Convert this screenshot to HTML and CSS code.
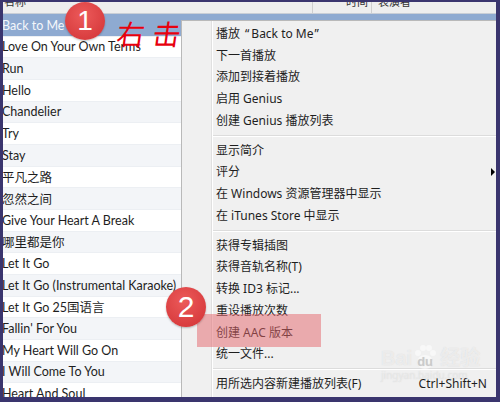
FILE: index.html
```html
<!DOCTYPE html>
<html>
<head>
	<title>iTunes context menu</title>
	<link rel="stylesheet" href="styles.css">
</head>
<body>
	<div class="screen">
		<div class="header">
			<span class="colName">名称</span>
			<span class="colTime">时间</span>
			<span class="colArtist">表演者</span>
		</div>

		<div class="list">
			<div class="row selected"><span class="colName">Back to Me</span><span class="colTime">3:26</span><span class="colArtist">Marian Hill</span></div>
			<div class="row"><span class="colName">Love On Your Own Terms</span></div>
			<div class="row"><span class="colName">Run</span></div>
			<div class="row"><span class="colName">Hello</span></div>
			<div class="row"><span class="colName">Chandelier</span></div>
			<div class="row"><span class="colName">Try</span></div>
			<div class="row"><span class="colName">Stay</span></div>
			<div class="row"><span class="colName">平凡之路</span></div>
			<div class="row"><span class="colName">忽然之间</span></div>
			<div class="row"><span class="colName">Give Your Heart A Break</span></div>
			<div class="row"><span class="colName">哪里都是你</span></div>
			<div class="row"><span class="colName">Let It Go</span></div>
			<div class="row"><span class="colName">Let It Go (Instrumental Karaoke)</span></div>
			<div class="row"><span class="colName">Let It Go 25国语言</span></div>
			<div class="row"><span class="colName">Fallin' For You</span></div>
			<div class="row"><span class="colName">My Heart Will Go On</span></div>
			<div class="row"><span class="colName">I Will Come To You</span></div>
			<div class="row"><span class="colName">Heart And Soul</span></div>
		</div>

		<!-- right click menu -->
		<div class="menu">
			<div class="item"><span>播放<span class="qOpen">“</span>Back to Me<span class="qClose">”</span></span></div>
			<div class="item">下一首播放</div>
			<div class="item">添加到接着播放</div>
			<div class="item">启用 Genius</div>
			<div class="item">创建 Genius 播放列表</div>
			<div class="sep"></div>
			<div class="item">显示简介</div>
			<div class="item sub">评分</div>
			<div class="item">在 Windows 资源管理器中显示</div>
			<div class="item">在 iTunes Store 中显示</div>
			<div class="sep"></div>
			<div class="item">获得专辑插图</div>
			<div class="item">获得音轨名称(T)</div>
			<div class="item">转换 ID3 标记...</div>
			<div class="item">重设播放次数</div>
			<div class="item">创建 AAC 版本</div>
			<div class="item">统一文件...</div>
			<div class="sep"></div>
			<div class="item"><span>用所选内容新建播放列表(F)</span><span class="key">Ctrl+Shift+N</span></div>
		</div>

		<!-- annotations -->
		<div class="mark"></div>
		<div class="badge one">1</div>
		<div class="badge two">2</div>
		<div class="note">右击</div>

		<div class="watermark">
			<div class="wmTop">Bai<span class="pawBox"><svg class="paw" width="26" height="24" viewBox="0 0 26 24"><circle cx="6" cy="8" r="3"/><circle cx="11" cy="3" r="3"/><circle cx="17" cy="3" r="3"/><circle cx="21" cy="8" r="3"/><ellipse cx="13" cy="17" rx="8" ry="7"/></svg><span class="du">du</span></span>经验</div>
			<div class="wmBottom">jingyan.baidu.com</div>
		</div>
	</div>
</body>
</html>
```

FILE: styles.css
```css
*{
	margin: 0;
	padding: 0;
	box-sizing: border-box;
}

body{
	width: 500px;
	height: 402px;
	overflow: hidden;
	background-color: #3a356e;
	font: normal 12px "Noto Sans", "Noto Sans CJK SC", sans-serif;
	color: #1e1e1e;
}

.screen{
	position: relative;
	width: 493px;
	height: 395px;
	margin: 2px 4px 5px 3px;
	overflow: hidden;
	background-color: #ffffff;
}

.header{
	display: flex;
	height: 12px;
	overflow: hidden;
	background-color: #eeeeee;
	border-bottom: 1px solid #c9ced6;
	color: #333333;
	font-size: 11px;
	line-height: 12px;
}

.header span{
	margin-top: -6px;
}

.header .colName{
	width: 310px;
	padding-left: 1px;
	border-right: 1px solid #cfcfcf;
}

.header .colTime{
	width: 59px;
	padding-left: 33px;
	border-right: 1px solid #cfcfcf;
}

.header .colArtist{
	padding-left: 6px;
}

.row{
	display: flex;
	align-items: center;
	height: 21.67px;
	border-top: 1px solid #eceff3;
	font: normal 12.5px Lato, "Noto Sans CJK SC", sans-serif;
	white-space: nowrap;
}

.row:nth-child(odd){
	background-color: #f3f5f8;
}

.row .colName{
	width: 310px;
	margin-left: -1px;
}

.row .colTime{
	width: 59px;
	padding-left: 31px;
}

.row .colArtist{
	padding-left: 6px;
}

.row.selected{
	background-color: #8eaad1;
	border-top-color: #8eaad1;
	color: #f4f7fb;
}

.menu{
	position: absolute;
	left: 178px;
	top: 18px;
	right: 0;
	bottom: -10px;
	padding-top: 1px;
	border: 1px solid #b9b9b9;
	border-right: none;
	background: linear-gradient(to right, #f0f0f0 29px, #e0e0e0 29px, #e0e0e0 30px, #ffffff 30px, #ffffff 31px, #f0f0f0 31px);
	font-family: "Noto Sans", "Noto Sans CJK SC", sans-serif;
	font-size: 12px;
	color: #1e1e1e;
}

.menu .item{
	display: flex;
	justify-content: space-between;
	align-items: center;
	height: 21.75px;
	padding: 0 9px 0 34px;
	white-space: nowrap;
}

.menu .qOpen{
	margin: 0 2px 0 5px;
}

.menu .qClose{
	margin-left: 1px;
}

.menu .sub{
	position: relative;
}

.menu .sub::after{
	content: "";
	position: absolute;
	right: 1px;
	top: 7px;
	border-left: 4px solid #000000;
	border-top: 4px solid transparent;
	border-bottom: 4px solid transparent;
}

.menu .sep{
	height: 8px;
	margin-left: 31px;
	padding-top: 4px;
}

.menu .sep::before{
	content: "";
	display: block;
	border-top: 1px solid #dcdcdc;
	border-bottom: 1px solid #ffffff;
}

.mark{
	position: absolute;
	left: 194px;
	top: 312px;
	width: 124px;
	height: 33px;
	background-color: rgba(228, 100, 106, 0.5);
}

.badge{
	position: absolute;
	width: 38px;
	height: 38px;
	border-radius: 50%;
	background: radial-gradient(circle at 45% 35%, #ec5a5a, #d83c3e 75%);
	box-shadow: 0 1px 2px rgba(0, 0, 0, 0.25);
	color: #ffffff;
	font: normal 28px "Liberation Sans", Arial, sans-serif;
	line-height: 38px;
	text-align: center;
}

.badge.one{
	left: 62px;
	top: 0px;
	width: 40px;
	height: 38px;
}

.badge.two{
	left: 163px;
	top: 285px;
	width: 40px;
	height: 40px;
	line-height: 40px;
	font-size: 30px;
}

.note{
	position: absolute;
	left: 114px;
	top: 11px;
	color: #e8000e;
	font: normal 28px "Noto Sans CJK SC", sans-serif;
	letter-spacing: 8px;
	transform: skewX(-8deg);
}

.watermark{
	position: absolute;
	left: 378px;
	top: 341px;
	color: rgba(255, 255, 255, 0.55);
	text-shadow: 0 0 1px rgba(160, 160, 160, 0.35);
}

.wmTop{
	display: flex;
	align-items: flex-end;
	height: 26px;
	font: bold 20px "Liberation Sans", "Noto Sans CJK SC", sans-serif;
	line-height: 22px;
}

.pawBox{
	position: relative;
	display: inline-flex;
	align-items: flex-end;
	justify-content: center;
	width: 26px;
	height: 24px;
	margin-right: 2px;
}

.paw{
	position: absolute;
	left: 0;
	top: 0;
	fill: rgba(255, 255, 255, 0.5);
}

.du{
	position: relative;
	font-size: 13px;
	line-height: 14px;
	color: rgba(190, 190, 190, 0.6);
}

.wmBottom{
	font-size: 10px;
	line-height: 12px;
	color: rgba(255, 255, 255, 0.35);
}
```
